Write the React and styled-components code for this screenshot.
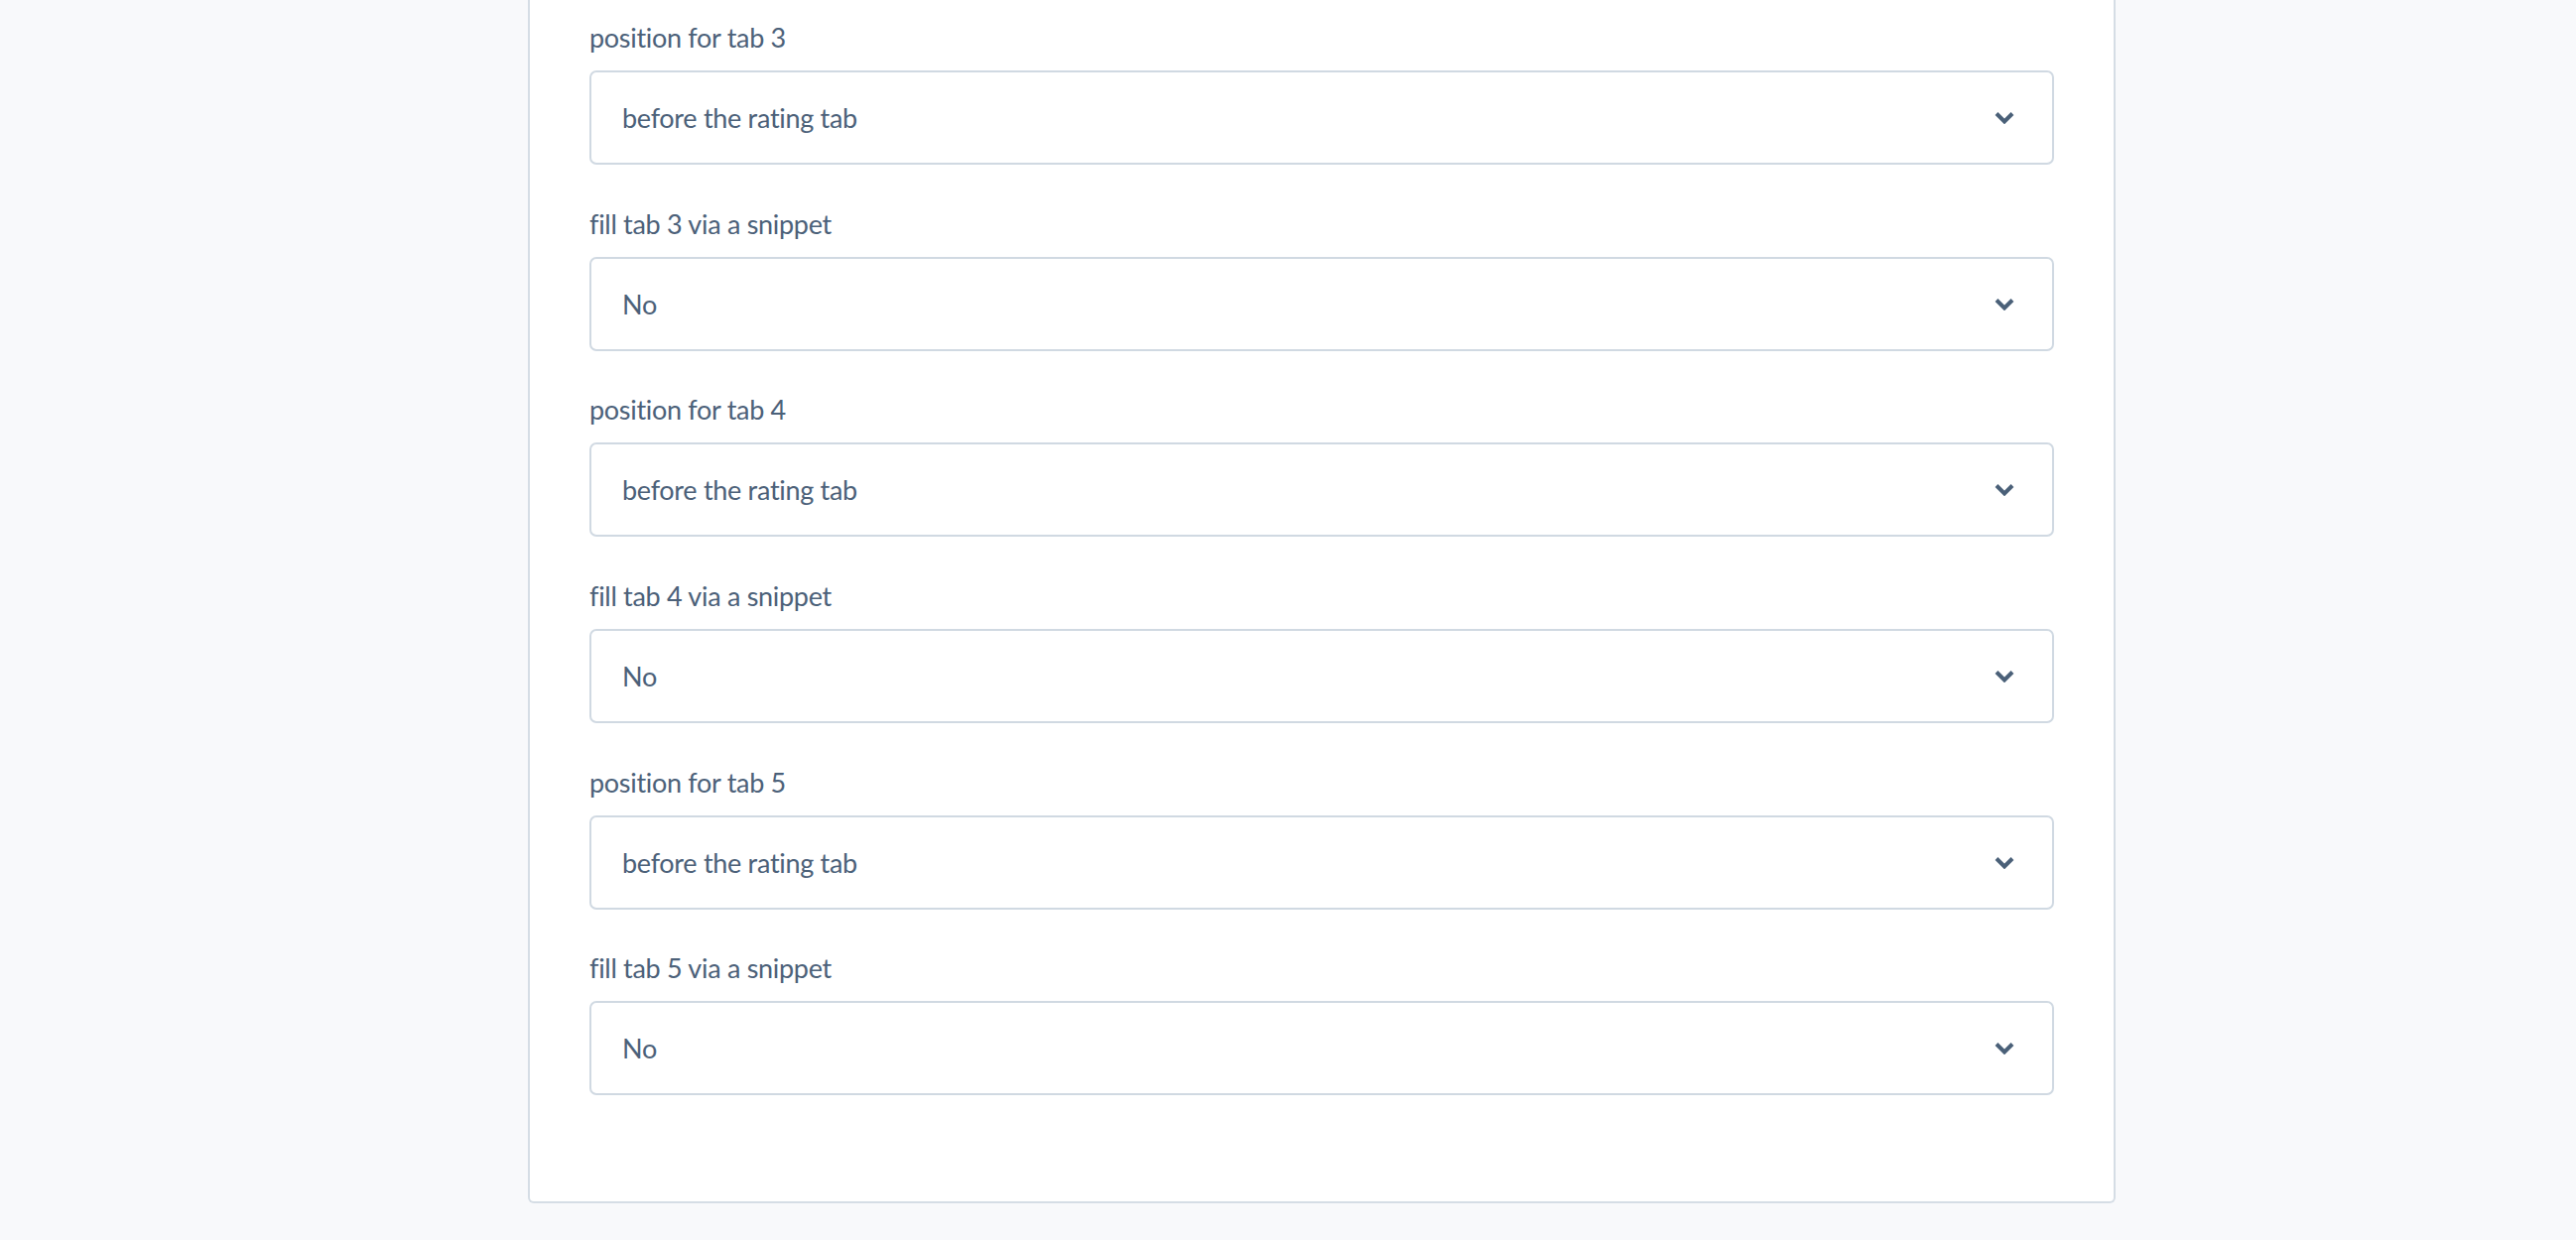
import React from 'react'
import styled, { createGlobalStyle } from 'styled-components'

const GlobalStyle = createGlobalStyle`
    html, body {
        margin: 0;
        padding: 0;
        background: #f8f9fb;
    }
    body {
        font-family: Lato, "Open Sans", sans-serif;
        color: #4c6179;
        overflow: hidden;
    }
`

const Page = styled.div`
    min-height: 1250px;
    padding-left: 532px;
`

const Card = styled.div`
    width: 1600px;
    box-sizing: border-box;
    background: #fff;
    border: 2px solid #d5dde5;
    border-top: none;
    border-radius: 0 0 6px 6px;
    padding: 18px 60px 67px;
`

const Field = styled.div`
    display: flex;
    flex-direction: column;
    gap: 14px;
    margin-bottom: 39.7px;
`

const Label = styled.label`
    font-size: 27px;
    line-height: 39px;
    letter-spacing: -0.3px;
`

const Select = styled.div`
    height: 95px;
    box-sizing: border-box;
    border: 2px solid #d0d9e2;
    border-radius: 7px;
    display: flex;
    align-items: center;
    justify-content: space-between;
    padding: 0 38px 0 31px;
    font-size: 27px;
    letter-spacing: -0.3px;
    background: #fff;
`

const Chevron = () => (
    <svg width="20" height="13" viewBox="0 0 20 13">
        <path d="M2 2.5 L10 10.5 L18 2.5" fill="none" stroke="#4a6078" strokeWidth="4" />
    </svg>
)

const fields = [3, 4, 5].flatMap((n) => [
    { label: `position for tab ${n}`, value: 'before the rating tab' },
    { label: `fill tab ${n} via a snippet`, value: 'No' }
])

export default function App() {
    return (
        <Page>
            <GlobalStyle />
            <Card>
                {fields.map((f) => (
                    <Field key={f.label}>
                        <Label>{f.label}</Label>
                        <Select>
                            <span>{f.value}</span>
                            <Chevron />
                        </Select>
                    </Field>
                ))}
            </Card>
        </Page>
    )
}
